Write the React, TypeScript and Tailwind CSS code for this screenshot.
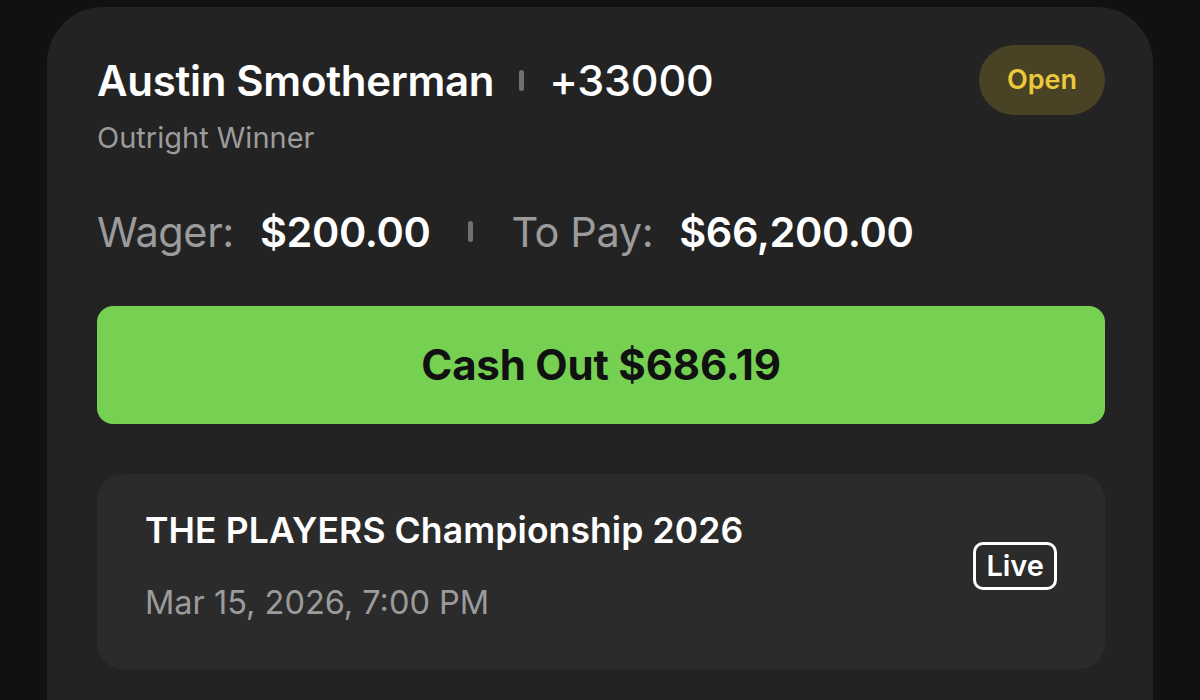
export default function App() {
  return (
    <div
      className="w-[1200px] h-[700px] overflow-hidden bg-[#111111] px-[47px] pt-[7px]"
      style={{ fontFamily: "Inter, 'Noto Sans', sans-serif" }}
    >
      {/* Bet card */}
      <div className="h-[720px] rounded-t-[56px] bg-[#232323] pl-[50px] pr-[48px] pt-[38px]">
        {/* Header */}
        <div className="flex items-start justify-between">
          <div>
            <div className="flex items-center h-[70px]">
              <span className="text-[42px] font-semibold text-white tracking-[-0.3px]">
                Austin Smotherman
              </span>
              <span className="mx-[25px] h-[21px] w-[5px] rounded-full bg-[#707070]" />
              <span className="text-[43px] font-medium text-white tracking-[-0.2px]">
                +33000
              </span>
            </div>
            <p className="mt-[1px] text-[29px] text-[#9b9b9b]">Outright Winner</p>
          </div>
          <div className="flex h-[70px] w-[126px] items-center justify-center rounded-full bg-[#4a4224]">
            <span className="text-[27px] font-semibold text-[#ecc83c]">Open</span>
          </div>
        </div>

        {/* Wager / To pay */}
        <div className="mt-[41px] flex items-center text-[41.5px] leading-[62px] tracking-[-0.4px]">
          <span className="text-[#9b9b9b]">Wager:</span>
          <span className="ml-[26px] font-semibold text-white">$200.00</span>
          <span className="mx-[38px] h-[21px] w-[5px] rounded-full bg-[#707070]" />
          <span className="text-[#9b9b9b]">To Pay:</span>
          <span className="ml-[26px] font-semibold text-white">$66,200.00</span>
        </div>

        {/* Cash out */}
        <button className="mt-[43px] flex h-[118px] w-full items-center justify-center rounded-[16px] bg-[#76d152]">
          <span className="text-[42px] font-bold text-[#111111] tracking-[-0.2px]">
            Cash Out $686.19
          </span>
        </button>

        {/* Event */}
        <div className="mt-[50px] flex h-[195px] items-center justify-between rounded-[26px] bg-[#2b2b2b] pl-[48px] pr-[48px] pb-[10px]">
          <div className="flex flex-col gap-[22px]">
            <span className="text-[35.5px] leading-[52px] font-semibold text-white tracking-[0.1px]">
              THE PLAYERS Championship 2026
            </span>
            <span className="text-[32.5px] leading-[48px] text-[#9b9b9b]">
              Mar 15, 2026, 7:00 PM
            </span>
          </div>
          <div className="flex h-[48px] items-center rounded-[10px] border-[3px] border-white px-[10px]">
            <span className="text-[29px] font-semibold text-white">Live</span>
          </div>
        </div>
      </div>
    </div>
  );
}
